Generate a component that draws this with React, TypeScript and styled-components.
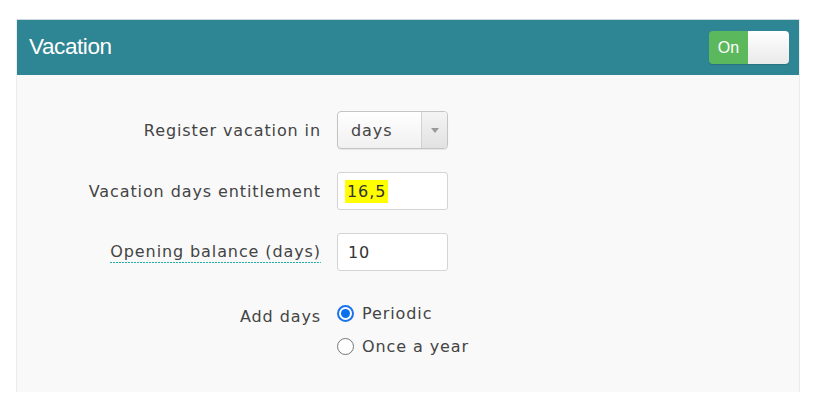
import React, { useState } from "react";
import styled, { createGlobalStyle } from "styled-components";

const GlobalStyle = createGlobalStyle`
  body {
    margin: 0;
    background: #ffffff;
    font-family: "DejaVu Sans", Verdana, sans-serif;
  }
`;

const Page = styled.div`
  padding: 19px 22px 20px 16px;
`;

const Panel = styled.div`
  background: #f9f9f9;
  border-left: 1px solid #ececec;
  border-right: 1px solid #ececec;
`;

const Header = styled.div`
  height: 55px;
  background: #2e8593;
  display: flex;
  align-items: center;
  justify-content: space-between;
  padding: 0 10px 0 12px;
  border-top: 1px solid #c9d9dc;
`;

const Title = styled.h2`
  margin: 0 0 2px;
  font-family: "Liberation Sans", Arial, sans-serif;
  font-weight: normal;
  font-size: 22.5px;
  color: #ffffff;
  letter-spacing: -0.4px;
`;

const Toggle = styled.button`
  display: flex;
  width: 80px;
  height: 33px;
  padding: 0;
  border: none;
  border-radius: 4px;
  overflow: hidden;
  cursor: pointer;
  background: transparent;
  box-shadow: 0 1px 1px rgba(0, 0, 0, 0.15);
`;

const ToggleOn = styled.span<{ $active: boolean }>`
  width: 39px;
  display: flex;
  align-items: center;
  justify-content: center;
  background: ${(p) => (p.$active ? "#5cb85c" : "#e6e6e6")};
  color: ${(p) => (p.$active ? "#ffffff" : "#e6e6e6")};
  font-family: "Liberation Sans", Arial, sans-serif;
  font-size: 16px;
`;

const ToggleKnob = styled.span`
  flex: 1;
  background: linear-gradient(#ffffff, #e9e9e9);
`;

const Body = styled.div`
  display: grid;
  grid-template-columns: 304px 1fr;
  column-gap: 16px;
  row-gap: 23px;
  align-items: center;
  padding: 36px 0 36px;
  font-size: 16px;
  letter-spacing: 0.9px;
  color: #444444;
`;

const Label = styled.label<{ $hint?: boolean }>`
  justify-self: end;
  white-space: nowrap;
  ${(p) =>
    p.$hint &&
    `
    padding-bottom: 2px;
    background: repeating-linear-gradient(90deg, #1fb0aa 0 2px, transparent 2px 3px) bottom / 100% 1px no-repeat;
  `}
`;

const TopLabel = styled(Label)`
  align-self: start;
  padding-top: 3px;
  margin-top: 10px;
`;

const SelectBox = styled.div`
  width: 111px;
  height: 38px;
  box-sizing: border-box;
  display: flex;
  border: 1px solid #c4c4c4;
  border-radius: 4px;
  background: linear-gradient(#ffffff, #f0f0f0);
  box-shadow: 0 1px 1px rgba(0, 0, 0, 0.08);
`;

const SelectValue = styled.span`
  flex: 1;
  display: flex;
  align-items: center;
  padding-left: 13px;
`;

const SelectArrow = styled.span`
  width: 25px;
  border-left: 1px solid #d2d2d2;
  display: flex;
  align-items: center;
  justify-content: center;
  background: linear-gradient(#f4f4f4, #e2e2e2);
  border-radius: 0 3px 3px 0;
  &::after {
    content: "";
    border-left: 4px solid transparent;
    border-right: 4px solid transparent;
    border-top: 5px solid #999999;
  }
`;

const Field = styled.div`
  width: 111px;
  height: 38px;
  box-sizing: border-box;
  display: flex;
  align-items: center;
  padding-left: 7px;
  border: 1px solid #d4d4d4;
  border-radius: 3px;
  background: #ffffff;
  color: #333333;
`;

const Marked = styled.span`
  background: #ffff00;
  padding: 2px 2px 2px 2px;
`;

const Plain = styled.span`
  padding-left: 3px;
`;

const Options = styled.div`
  display: flex;
  flex-direction: column;
  gap: 14px;
  margin-top: 10px;
`;

const Option = styled.label`
  display: flex;
  align-items: center;
  gap: 8px;
  cursor: pointer;
`;

const Radio = styled.span<{ $checked: boolean }>`
  width: 17px;
  height: 17px;
  box-sizing: border-box;
  border-radius: 50%;
  border: ${(p) => (p.$checked ? "2px solid #1a73e8" : "1.5px solid #767676")};
  background: #ffffff;
  display: flex;
  align-items: center;
  justify-content: center;
  &::after {
    content: "";
    width: 9px;
    height: 9px;
    border-radius: 50%;
    background: ${(p) => (p.$checked ? "#0b6ff0" : "transparent")};
  }
`;

const App = () => {
  const [enabled, setEnabled] = useState(true);
  const [mode, setMode] = useState("periodic");

  return (
    <>
      <GlobalStyle />
      <Page>
        <Panel>
          <Header>
            <Title>Vacation</Title>
            <Toggle onClick={() => setEnabled(!enabled)}>
              <ToggleOn $active={enabled}>On</ToggleOn>
              <ToggleKnob />
            </Toggle>
          </Header>
          <Body>
            <Label>Register vacation in</Label>
            <SelectBox>
              <SelectValue>days</SelectValue>
              <SelectArrow />
            </SelectBox>

            <Label>Vacation days entitlement</Label>
            <Field>
              <Marked>16,5</Marked>
            </Field>

            <Label $hint>Opening balance (days)</Label>
            <Field>
              <Plain>10</Plain>
            </Field>

            <TopLabel>Add days</TopLabel>
            <Options>
              <Option onClick={() => setMode("periodic")}>
                <Radio $checked={mode === "periodic"} />
                Periodic
              </Option>
              <Option onClick={() => setMode("yearly")}>
                <Radio $checked={mode === "yearly"} />
                Once a year
              </Option>
            </Options>
          </Body>
        </Panel>
      </Page>
    </>
  );
};

export default App;
